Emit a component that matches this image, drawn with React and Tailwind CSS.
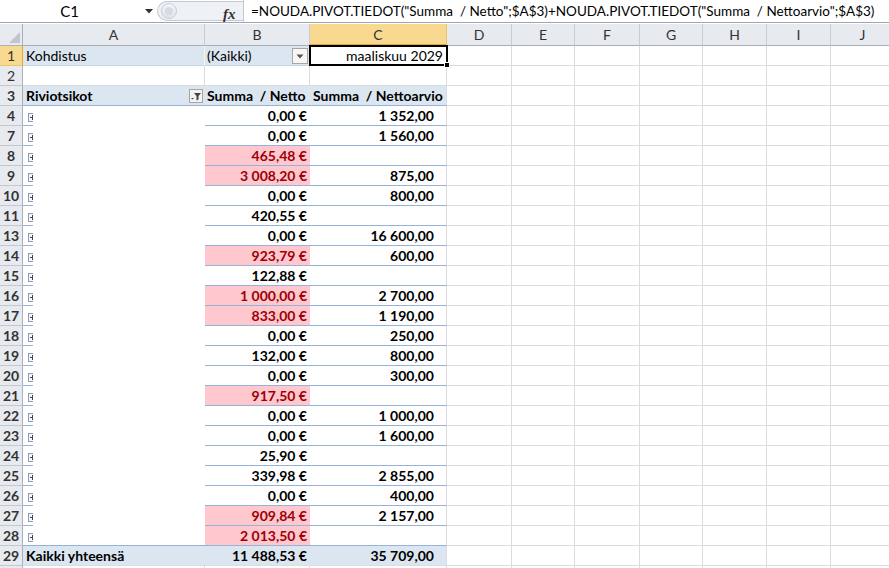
import React from "react";

const FONT = { fontFamily: "Lato, 'Liberation Sans', sans-serif" };

const EXTRA = [
  { k: "D", w: "w-[65px]" },
  { k: "E", w: "w-[63px]" },
  { k: "F", w: "w-[65px]" },
  { k: "G", w: "w-[63px]" },
  { k: "H", w: "w-[64px]" },
  { k: "I", w: "w-[64px]" },
  { k: "J", w: "w-[64px]" },
];

const DATA = [
  [4, "0,00 €", "1 352,00", false],
  [7, "0,00 €", "1 560,00", false],
  [8, "465,48 €", "", true],
  [9, "3 008,20 €", "875,00", true],
  [10, "0,00 €", "800,00", false],
  [11, "420,55 €", "", false],
  [13, "0,00 €", "16 600,00", false],
  [14, "923,79 €", "600,00", true],
  [15, "122,88 €", "", false],
  [16, "1 000,00 €", "2 700,00", true],
  [17, "833,00 €", "1 190,00", true],
  [18, "0,00 €", "250,00", false],
  [19, "132,00 €", "800,00", false],
  [20, "0,00 €", "300,00", false],
  [21, "917,50 €", "", true],
  [22, "0,00 €", "1 000,00", false],
  [23, "0,00 €", "1 600,00", false],
  [24, "25,90 €", "", false],
  [25, "339,98 €", "2 855,00", false],
  [26, "0,00 €", "400,00", false],
  [27, "909,84 €", "2 157,00", true],
  [28, "2 013,50 €", "", true],
];

function RowHead({ n, active }) {
  return (
    <div
      className={
        "w-[23px] h-[20px] shrink-0 box-border flex items-center justify-center text-[14px] " +
        (active
          ? "bg-[#f9d98f] text-[#333] border-b border-b-[#e8c46c] border-r border-r-[#e2a731]"
          : "bg-[#e7eaee] text-[#333] border-b border-b-[#c3c8cf] border-r border-r-[#a9b0ba]")
      }
    >
      {n}
    </div>
  );
}

function Extra() {
  return (
    <>
      {EXTRA.map((c) => (
        <div
          key={c.k}
          className={c.w + " h-[20px] shrink-0 box-border border-r border-b border-[#dadcdd]"}
        />
      ))}
    </>
  );
}

function ExpandIcon() {
  return (
    <div className="w-[10px] h-full overflow-hidden relative shrink-0">
      <div className="absolute left-[5px] top-[7px] w-[9px] h-[9px] box-border border border-[#8e9db3] bg-[#f4f6fa]">
        <div className="absolute left-[1px] top-[3px] w-[5px] h-[1px] bg-[#3c4a60]" />
        <div className="absolute left-[3px] top-[1px] w-[1px] h-[5px] bg-[#3c4a60]" />
      </div>
    </div>
  );
}

function FilterButton() {
  return (
    <div className="absolute right-[2px] top-[3px] w-[14px] h-[14px] box-border border border-[#a6a6a6] bg-[#f3f3f3] flex items-center justify-center">
      <svg width="12" height="10" viewBox="0 0 12 10">
        <path d="M4 2 H11 L8.5 5 V8.5 L6.5 9.5 V5 Z" fill="#444" />
        <path d="M1 7 H4 L2.5 8.5 Z" fill="#444" />
      </svg>
    </div>
  );
}

function DropButton() {
  return (
    <div className="absolute right-[2px] top-[2px] w-[16px] h-[16px] box-border border border-[#a6a6a6] bg-[#f7f7f7] flex items-center justify-center">
      <svg width="8" height="5" viewBox="0 0 8 5">
        <path d="M0.5 0.5 H7.5 L4 4.5 Z" fill="#555" />
      </svg>
    </div>
  );
}

export default function App() {
  return (
    <div
      className="w-[889px] h-[568px] overflow-hidden bg-white text-black relative"
      style={FONT}
    >
      {/* Formula bar */}
      <div className="h-[23px] flex items-stretch border-b border-[#9ea6b0] bg-white">
        <div className="w-[157px] shrink-0 flex items-center relative">
          <div className="w-[139px] text-center text-[15px] text-black">C1</div>
          <svg className="absolute left-[145px] top-[9px]" width="8" height="5" viewBox="0 0 8 5">
            <path d="M0 0 H8 L4 4.5 Z" fill="#333" />
          </svg>
        </div>
        <div className="w-[86px] shrink-0 relative bg-[#eef1f5] border-l border-y border-[#c3c9d1] rounded-l-[11px] my-[1px] flex items-center">
          <div className="ml-[3px] w-[16px] h-[16px] rounded-full bg-gradient-to-b from-[#f4f6f9] to-[#dfe3e9] border border-[#c9ced6] flex items-center justify-center">
            <div className="w-[8px] h-[8px] rounded-full bg-[#d6dbe2]" />
          </div>
          <span className="absolute left-[65px] top-[1px] text-[15px] italic font-bold text-[#333]" style={{ fontFamily: "'Liberation Serif', serif" }}>
            fx
          </span>
        </div>
        <div className="flex-1 min-w-0 border-l border-[#c3c9d1] flex items-center pl-[7px] text-[13.5px] whitespace-pre overflow-hidden">
          {'=NOUDA.PIVOT.TIEDOT("Summa  / Netto";$A$3)+NOUDA.PIVOT.TIEDOT("Summa  / Nettoarvio";$A$3)'}
        </div>
      </div>
      <div className="h-[1px] bg-white" />

      {/* Column headers */}
      <div className="flex h-[22px]">
        <div className="w-[23px] shrink-0 box-border bg-[#e7eaee] border-r border-b border-[#a9b0ba] relative">
          <svg className="absolute right-[2px] bottom-[2px]" width="11" height="11" viewBox="0 0 11 11">
            <path d="M11 0 V11 H0 Z" fill="#c1c6cd" />
          </svg>
        </div>
        {[
          { k: "A", w: "w-[182px]" },
          { k: "B", w: "w-[105px]" },
        ].map((c) => (
          <div
            key={c.k}
            className={c.w + " shrink-0 box-border bg-[#e7eaee] border-r border-r-[#c8cdd4] border-b border-b-[#a9b0ba] flex items-center justify-center text-[14px] text-[#333]"}
          >
            {c.k}
          </div>
        ))}
        <div className="w-[137px] shrink-0 box-border bg-[#f9d98f] border-r border-r-[#e8c46c] border-b-2 border-b-[#e2a731] flex items-center justify-center text-[14px] text-[#333]">
          C
        </div>
        {EXTRA.map((c) => (
          <div
            key={c.k}
            className={c.w + " shrink-0 box-border bg-[#e7eaee] border-r border-r-[#c8cdd4] border-b border-b-[#a9b0ba] flex items-center justify-center text-[14px] text-[#333]"}
          >
            {c.k}
          </div>
        ))}
      </div>

      {/* Row 1 */}
      <div className="flex h-[20px] text-[14px]">
        <RowHead n={1} active />
        <div className="w-[182px] shrink-0 box-border bg-[#dce6f1] border-r border-r-[#eef3f9] border-b border-b-[#c9d6e6] pl-[3px] flex items-center">
          Kohdistus
        </div>
        <div className="w-[105px] shrink-0 box-border bg-[#dce6f1] border-b border-b-[#c9d6e6] pl-[2px] flex items-center relative">
          (Kaikki)
          <DropButton />
        </div>
        <div className="w-[137px] shrink-0 box-border border-r border-b border-[#dadcdd] relative flex items-center justify-end pr-[3px]">
          maaliskuu 2029
          <div className="absolute -left-[1px] -top-[1px] w-[139px] h-[21px] box-border border-2 border-black pointer-events-none" />
          <div className="absolute -right-[4px] -bottom-[3px] w-[6px] h-[6px] bg-black border border-white" />
        </div>
        <Extra />
      </div>

      {/* Row 2 */}
      <div className="flex h-[20px] text-[14px]">
        <RowHead n={2} />
        <div className="w-[182px] shrink-0 box-border border-r border-b border-[#dadcdd]" />
        <div className="w-[105px] shrink-0 box-border border-r border-b border-[#dadcdd]" />
        <div className="w-[137px] shrink-0 box-border border-r border-b border-[#dadcdd]" />
        <Extra />
      </div>

      {/* Row 3 */}
      <div className="flex h-[20px] text-[14px] font-bold">
        <RowHead n={3} />
        <div className="w-[182px] shrink-0 box-border bg-[#dce6f1] border-b border-b-[#95b3d7] pl-[3px] flex items-center relative">
          Riviotsikot
          <FilterButton />
        </div>
        <div className="w-[105px] shrink-0 box-border bg-[#dce6f1] border-b border-b-[#95b3d7] pl-[2px] flex items-center whitespace-pre">
          {"Summa  / Netto"}
        </div>
        <div className="w-[137px] shrink-0 box-border bg-[#dce6f1] border-b border-b-[#95b3d7] border-r border-r-[#dadcdd] pl-[3px] flex items-center whitespace-pre">
          {"Summa  / Nettoarvio"}
        </div>
        <Extra />
      </div>

      {/* Data rows */}
      {DATA.map(([n, b, c, red], i) => {
        const last = i === DATA.length - 1;
        return (
          <div key={n} className="flex h-[20px] text-[14px] font-bold">
            <RowHead n={n} />
            <div className="w-[182px] shrink-0 flex">
              <div className="w-[10px] shrink-0 box-border border-b border-[#95b3d7]">
                <ExpandIcon />
              </div>
              <div
                className={
                  "w-[172px] shrink-0 box-border bg-white " +
                  (last ? "border-b border-[#95b3d7]" : "")
                }
              />
            </div>
            <div
              className={
                "w-[105px] shrink-0 box-border border-b border-[#95b3d7] flex items-center justify-end pr-[3px] " +
                (red ? "bg-[#ffc7ce] text-[#9c0006]" : "bg-white text-black")
              }
            >
              {b}
            </div>
            <div className="w-[137px] shrink-0 box-border border-b border-b-[#95b3d7] border-r border-r-[#dadcdd] flex items-center justify-end pr-[12px]">
              {c}
            </div>
            <Extra />
          </div>
        );
      })}

      {/* Row 29 total */}
      <div className="flex h-[20px] text-[14px] font-bold">
        <RowHead n={29} />
        <div className="w-[182px] shrink-0 box-border bg-[#dce6f1] border-b border-b-[#dadcdd] pl-[3px] flex items-center">
          Kaikki yhteensä
        </div>
        <div className="w-[105px] shrink-0 box-border bg-[#dce6f1] border-b border-b-[#dadcdd] flex items-center justify-end pr-[3px]">
          11 488,53 €
        </div>
        <div className="w-[137px] shrink-0 box-border bg-[#dce6f1] border-b border-b-[#dadcdd] border-r border-r-[#dadcdd] flex items-center justify-end pr-[12px]">
          35 709,00
        </div>
        <Extra />
      </div>

      {/* Row 30 partial (only its top edge is in view) */}
      <div className="flex h-[20px] text-[14px]">
        <RowHead n="" />
        <div className="w-[182px] shrink-0 box-border border-r border-b border-[#dadcdd]" />
        <div className="w-[105px] shrink-0 box-border border-r border-b border-[#dadcdd]" />
        <div className="w-[137px] shrink-0 box-border border-r border-b border-[#dadcdd]" />
        <Extra />
      </div>
    </div>
  );
}
